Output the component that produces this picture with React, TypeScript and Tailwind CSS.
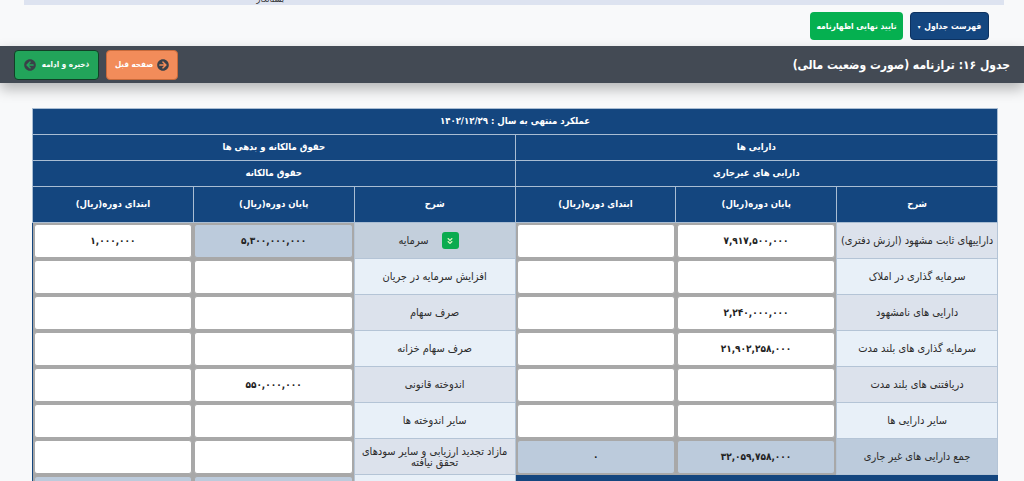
import { FaAngleDoubleDown, FaArrowCircleLeft, FaArrowCircleRight } from "react-icons/fa";

type Row = {
  right: string;
  rightEnd?: string;
  rightStart?: string;
  left: string;
  leftEnd?: string;
  leftStart?: string;
  collapse?: boolean;
  leftEndTotal?: boolean;
};

const rows: Row[] = [
  {
    right: "داراییهای ثابت مشهود (ارزش دفتری)",
    rightEnd: "۷,۹۱۷,۵۰۰,۰۰۰",
    left: "سرمایه",
    leftEnd: "۵,۳۰۰,۰۰۰,۰۰۰",
    leftStart: "۱,۰۰۰,۰۰۰",
    collapse: true,
    leftEndTotal: true,
  },
  { right: "سرمایه گذاری در املاک", left: "افزایش سرمایه در جریان" },
  { right: "دارایی های نامشهود", rightEnd: "۲,۲۴۰,۰۰۰,۰۰۰", left: "صرف سهام" },
  { right: "سرمایه گذاری های بلند مدت", rightEnd: "۲۱,۹۰۲,۲۵۸,۰۰۰", left: "صرف سهام خزانه" },
  { right: "دریافتنی های بلند مدت", left: "اندوخته قانونی", leftEnd: "۵۵۰,۰۰۰,۰۰۰" },
  { right: "سایر دارایی ها", left: "سایر اندوخته ها" },
];

function ValueCell({ value, total }: { value?: string; total?: boolean }) {
  return (
    <td className="bg-[#a8a8a8] p-0">
      <div
        className={`mx-px flex h-[34px] items-center justify-center rounded-[3px] border border-[#a8a8a8] text-[10px] font-bold text-[#222] ${
          total ? "bg-[#bccbdc]" : "bg-white"
        }`}
      >
        {value}
      </div>
    </td>
  );
}

function LabelCell({ text, shade, collapse }: { text: string; shade: string; collapse?: boolean }) {
  return (
    <td className={`border border-[#b4c4d6] px-0.5 text-center text-[11px] leading-[11px] text-[#2b2b2b] ${shade}`}>
      {collapse ? (
        <span className="flex items-center justify-center gap-[13px] pr-[12px]">
          <span className="flex h-[17px] w-[17px] items-center justify-center rounded-[3px] bg-[#0bab50] text-[8px] text-[#d8f5c0]">
            <FaAngleDoubleDown />
          </span>
          <span>{text}</span>
        </span>
      ) : (
        text
      )}
    </td>
  );
}

function HeadRow({ cols }: { cols: string[] }) {
  return (
    <tr className="h-[26px]">
      {cols.map((c) => (
        <th
          key={c}
          colSpan={6 / cols.length}
          className="border border-[#a9bdd3] text-center text-[9.5px] font-bold text-white"
        >
          {c}
        </th>
      ))}
    </tr>
  );
}

export default function App() {
  return (
    <div
      className="h-[481px] w-[1024px] overflow-hidden bg-[#f8f9fa] font-['DejaVu_Sans_Condensed','DejaVu_Sans',sans-serif]"
      dir="rtl"
    >
      <div className="ml-[24px] mr-[20px] h-[5px] overflow-hidden bg-[#dde3f0] pr-[720px] text-[9px] leading-none text-[#333]">
        <div className="-mt-[5px]">بستانکار</div>
      </div>

      <div className="flex h-[41px] items-start gap-[7px] pr-[35px] pt-[7px]">
        <button className="flex h-[28px] w-[79px] items-center justify-center gap-1 whitespace-nowrap rounded-[4px] border border-[#0d3260] bg-[#14467f] text-[8.5px] font-bold text-white">
          فهرست جداول
          <span className="text-[6px]">▾</span>
        </button>
        <button className="flex h-[28px] w-[93px] items-center justify-center whitespace-nowrap rounded-[4px] bg-[#05b050] text-[8.5px] font-bold text-white">
          تایید نهایی اظهارنامه
        </button>
      </div>

      <div className="flex h-[37px] items-center justify-between bg-[#434a54] px-[14px] shadow-[0_6px_14px_rgba(0,0,0,0.28)]">
        <h1 className="text-[12px] font-bold text-white">جدول ۱۶: ترازنامه (صورت وضعیت مالی)</h1>
        <div className="flex gap-[7px]">
          <button className="flex h-[30px] w-[72px] items-center justify-center gap-1 whitespace-nowrap rounded-[4px] border border-[#c86a3a] bg-[#f28c5a] text-[8px] font-bold text-white">
            <FaArrowCircleRight className="text-[12px] text-[#3a4048]" />
            صفحه قبل
          </button>
          <button className="flex h-[30px] w-[85px] items-center justify-center gap-1.5 whitespace-nowrap rounded-[4px] border border-[#123f26] bg-[#22a45a] text-[8px] font-bold text-white">
            ذخیره و ادامه
            <FaArrowCircleLeft className="text-[12px] text-[#3a4048]" />
          </button>
        </div>
      </div>

      <div className="pl-[32px] pr-[26px] pt-[25px]">
        <table className="w-[966px] table-fixed border-collapse bg-[#14467f]">
          <thead>
            <HeadRow cols={["عملکرد منتهی به سال : ۱۴۰۲/۱۲/۲۹"]} />
            <HeadRow cols={["دارایی ها", "حقوق مالکانه و بدهی ها"]} />
            <HeadRow cols={["دارایی های غیرجاری", "حقوق مالکانه"]} />
            <tr className="h-[36px]">
              {["شرح", "پایان دوره(ریال)", "ابتدای دوره(ریال)", "شرح ", "پایان دوره(ریال) ", "ابتدای دوره(ریال) "].map((c) => (
                <th key={c} className="border border-[#a9bdd3] text-center text-[9.5px] font-bold text-white">
                  {c.trim()}
                </th>
              ))}
            </tr>
          </thead>
          <tbody>
            {rows.map((r, i) => {
              const shade = i % 2 === 0 ? "bg-[#dce2ec]" : "bg-[#e8f0f8]";
              return (
                <tr key={r.right} className="h-[36px]">
                  <LabelCell text={r.right} shade={shade} />
                  <ValueCell value={r.rightEnd} />
                  <ValueCell value={r.rightStart} />
                  <LabelCell text={r.left} shade={r.collapse ? "bg-[#c3cfdc]" : shade} collapse={r.collapse} />
                  <ValueCell value={r.leftEnd} total={r.leftEndTotal} />
                  <ValueCell value={r.leftStart} />
                </tr>
              );
            })}
            <tr className="h-[36px]">
              <LabelCell text="جمع دارایی های غیر جاری" shade="bg-[#bccbdc]" />
              <ValueCell value="۳۲,۰۵۹,۷۵۸,۰۰۰" total />
              <ValueCell value="۰" total />
              <LabelCell text="مازاد تجدید ارزیابی و سایر سودهای تحقق نیافته" shade="bg-[#dce2ec]" />
              <ValueCell />
              <ValueCell />
            </tr>
            <tr className="h-[36px]">
              <td colSpan={3} className="bg-[#14467f]" />
              <LabelCell text="" shade="bg-[#e8f0f8]" />
              <ValueCell total />
              <ValueCell total />
            </tr>
          </tbody>
        </table>
      </div>
    </div>
  );
}
